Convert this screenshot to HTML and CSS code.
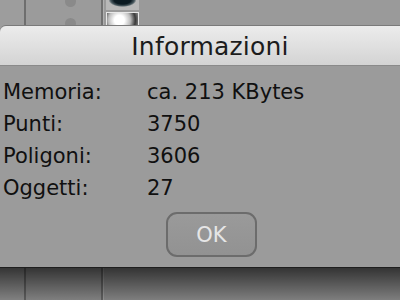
FILE: index.html
```html
<!DOCTYPE html>
<html lang="it">
<head>
<meta charset="utf-8">
<title>Informazioni</title>
<link rel="stylesheet" href="styles.css">
</head>
<body>
<div class="backdrop">
  <div class="col col-a"></div>
  <div class="col col-b"><span class="dot dot-1"></span><span class="dot dot-2"></span></div>
  <div class="col col-c">
    <div class="thumb thumb-dark"></div>
    <div class="thumb thumb-light"></div>
  </div>
</div>
<div class="dialog">
  <div class="titlebar">Informazioni</div>
  <div class="content">
    <div class="info">
      <span class="label">Memoria:</span><span class="value">ca. 213 KBytes</span>
      <span class="label">Punti:</span><span class="value">3750</span>
      <span class="label">Poligoni:</span><span class="value">3606</span>
      <span class="label">Oggetti:</span><span class="value">27</span>
    </div>
    <div class="actions"><button class="ok">OK</button></div>
  </div>
</div>
</body>
</html>
```
FILE: styles.css
```css
html, body { margin: 0; padding: 0; }
body {
  width: 400px;
  height: 300px;
  overflow: hidden;
  position: relative;
  background: #9a9a9a;
  font-family: "DejaVu Sans", "Liberation Sans", sans-serif;
}
.backdrop {
  display: flex;
  height: 300px;
}
.col { position: relative; height: 100%; }
.col-a { width: 24px; background: #9d9d9d; border-right: 2px solid #6e6e6e; }
.col-b { width: 75px; background: #9b9b9b; border-right: 2px solid #707070; }
.col-c { flex: 1; background: #9a9a9a; border-left: 1px solid #b0b0b0; padding-left: 2px; }
.dot {
  position: absolute;
  left: 39px;
  width: 11px; height: 11px;
  border-radius: 50%;
  background: #8a8a8a;
}
.dot-1 { top: -4px; }
.dot-2 { top: 18px; }
.thumb { width: 33px; box-sizing: border-box; }
.thumb-dark {
  height: 10px;
  background: radial-gradient(ellipse 14px 7px at 50% 0%, #0b1a22 0 60%, #4a5a60 85%, #b8b8b8 100%);
}
.thumb-light {
  height: 14px;
  margin-top: 2px;
  border: 1px solid #e8e8e8;
  background: radial-gradient(circle at 40% 60%, #ffffff 0 25%, #bdbdbd 55%, #3a3a3a 80%, #8a8a8a 100%);
}
.dialog {
  position: absolute;
  left: 0; right: 0;
  top: 25px;
  height: 241px;
  display: flex;
  flex-direction: column;
  background: #9b9b9b;
  border-top-left-radius: 6px;
  border-top: 1px solid #7a7a7a;
  border-bottom: 1px solid #5a5a5a;
}
.dialog::after {
  content: "";
  position: absolute;
  left: 0; right: 0;
  top: 100%;
  height: 40px;
  background: linear-gradient(to bottom, rgba(0,0,0,0.68), rgba(0,0,0,0.08));
}
.titlebar {
  height: 40px;
  border-top-left-radius: 6px;
  background: linear-gradient(to bottom, #ececec, #e0e0e0 50%, #d3d3d3);
  border-bottom: 1px solid #8a8a8a;
  display: flex;
  align-items: center;
  justify-content: center;
  padding-left: 20px;
  padding-top: 2px;
  box-sizing: border-box;
  font-size: 25px;
  color: #1c1c1c;
  letter-spacing: 0.2px;
}
.content {
  flex: 1;
  display: flex;
  flex-direction: column;
  padding: 10px 0 0 3px;
}
.info {
  display: grid;
  grid-template-columns: 144px auto;
  font-size: 21px;
  line-height: 32px;
  color: #101010;
}
.actions {
  display: flex;
  justify-content: center;
  padding-left: 20px;
  margin-top: 8px;
}
.ok {
  width: 91px;
  height: 45px;
  border: 2px solid #6c6c6c;
  border-radius: 11px;
  background: linear-gradient(to bottom, #9a9a9a, #929292);
  color: #e6e6e6;
  font-family: "DejaVu Sans", "Liberation Sans", sans-serif;
  font-size: 21px;
  padding: 0;
}
```
